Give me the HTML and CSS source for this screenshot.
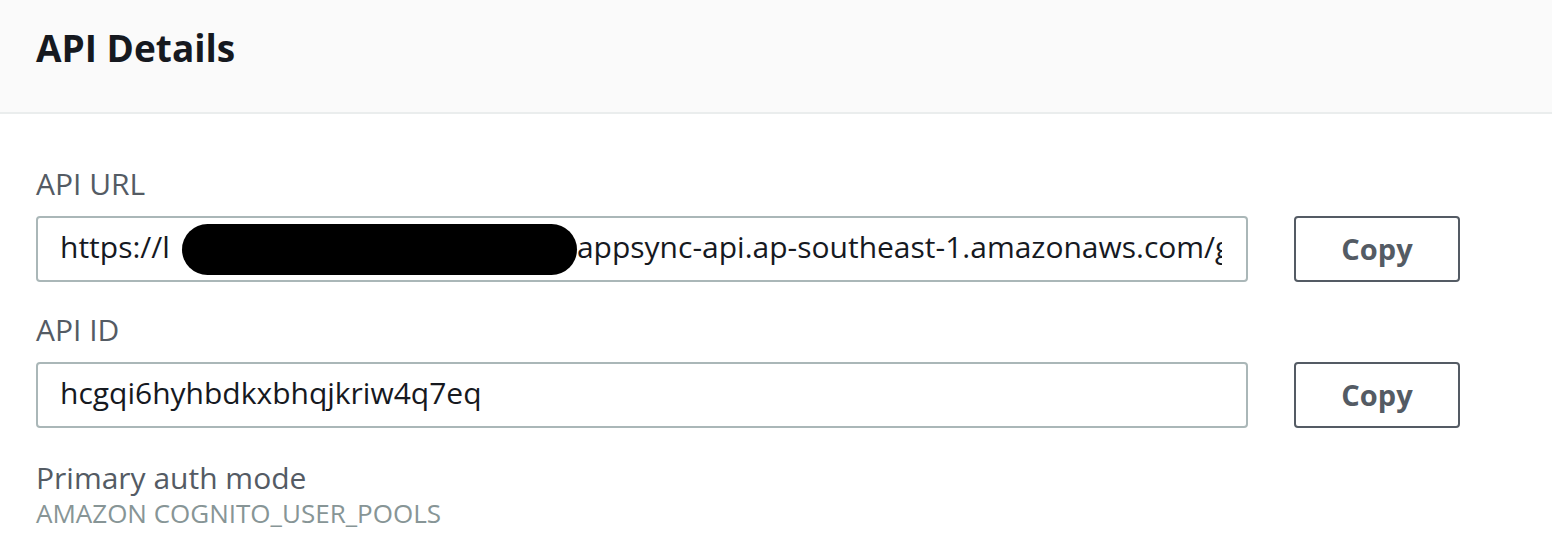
FILE: index.html
```html
<!DOCTYPE html>
<html lang="en">
<head>
<meta charset="utf-8">
<title>API Details</title>
<link rel="stylesheet" href="styles.css">
</head>
<body>
<section class="panel">
  <header class="panel-header">
    <h2 class="panel-title">API Details</h2>
  </header>
  <div class="panel-body">
    <div class="field">
      <div class="field-label">API URL</div>
      <div class="field-row">
        <div class="text-box"><span class="text-value">https://l<span class="redact"></span>appsync-api.ap-southeast-1.amazonaws.com/graphql</span></div>
        <button class="copy-btn" type="button">Copy</button>
      </div>
    </div>
    <div class="field">
      <div class="field-label">API ID</div>
      <div class="field-row">
        <div class="text-box"><span class="text-value">hcgqi6hyhbdkxbhqjkriw4q7eq</span></div>
        <button class="copy-btn" type="button">Copy</button>
      </div>
    </div>
    <div class="field field-static">
      <div class="field-label">Primary auth mode</div>
      <div class="field-static-value">AMAZON COGNITO_USER_POOLS</div>
    </div>
  </div>
</section>
</body>
</html>
```

FILE: styles.css
```css
* { box-sizing: border-box; }
html, body { margin: 0; padding: 0; background: #ffffff; }
body {
  font-family: "Open Sans", "Liberation Sans", sans-serif;
  color: #16191f;
}
.panel-header {
  height: 114px;
  background: #fafafa;
  border-bottom: 2px solid #eaeded;
  padding: 29px 36px 0;
}
.panel-title {
  margin: 0;
  font-size: 37px;
  font-weight: 700;
  line-height: 37px;
  color: #16191f;
}
.panel-body {
  padding: 50px 36px 0;
}
.field { margin-bottom: 28px; }
.field-label {
  font-size: 30px;
  line-height: 40px;
  color: #545b64;
  margin-bottom: 12px;
}
.field-row {
  display: flex;
  gap: 46px;
}
.text-box {
  width: 1212px;
  height: 66px;
  border: 2px solid #aab7b8;
  border-radius: 4px;
  padding: 0 24px 0 22px;
  display: flex;
  align-items: center;
}
.text-value {
  display: block;
  width: 100%;
  height: 56px;
  overflow: hidden;
  white-space: nowrap;
  font-size: 30px;
  line-height: 52px;
  color: #16191f;
}
.redact {
  display: inline-block;
  vertical-align: middle;
  width: 395px;
  height: 51px;
  border-radius: 26px;
  background: #000;
  margin-left: 12px;
}
.copy-btn {
  width: 166px;
  height: 66px;
  border: 2px solid #545b64;
  border-radius: 4px;
  background: #fff;
  color: #545b64;
  font-family: inherit;
  font-size: 29px;
  font-weight: 700;
  padding: 0 0 2px;
}
.field-static { margin-top: 30px; }
.field-static .field-label { margin-bottom: 0; }
.field-static-value {
  font-size: 26px;
  line-height: 30px;
  color: #879596;
}
```
